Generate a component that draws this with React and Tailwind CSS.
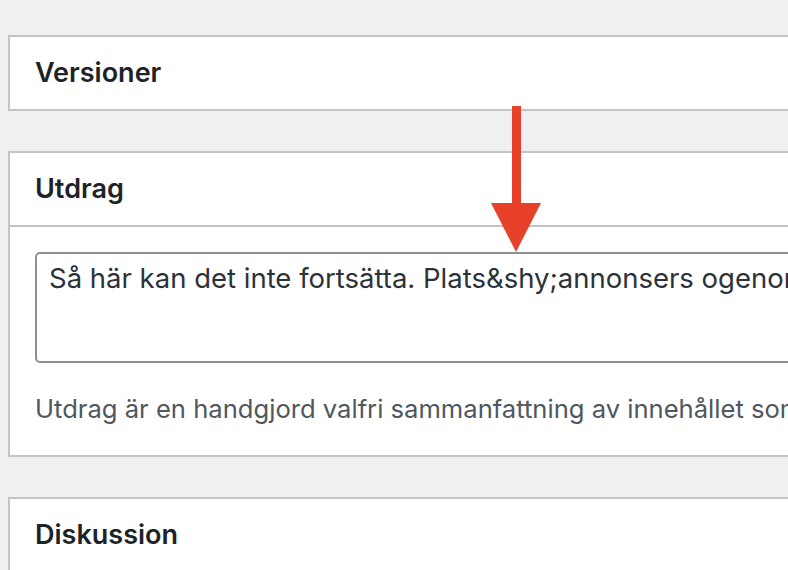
import React from "react";

const font = { fontFamily: "Inter, 'Liberation Sans', sans-serif" };

function Postbox({ title, children }) {
  return (
    <section className="w-[830px] bg-white border-2 border-[#c3c4c7]">
      <h2 className="h-[72px] flex items-center px-[25px] text-[27px] font-semibold text-[#1d2327]">
        {title}
      </h2>
      {children}
    </section>
  );
}

function Arrow() {
  return (
    <svg
      className="absolute left-[491px] top-[106px]"
      width="50"
      height="147"
      viewBox="0 0 50 147"
    >
      <rect x="21" y="0" width="9" height="100" fill="#e8412a" />
      <polygon points="0,97 50,97 25,146" fill="#e8412a" />
    </svg>
  );
}

export default function App() {
  return (
    <div
      className="relative w-[788px] h-[570px] overflow-hidden bg-[#f0f0f1] pl-[8px] pt-[35px]"
      style={font}
    >
      <div className="flex flex-col gap-[40px]">
        <Postbox title="Versioner" />

        <Postbox title="Utdrag">
          <div className="border-t-2 border-[#c3c4c7] px-[25px] pt-[25px] pb-[28px]">
            <div className="h-[111px] rounded-[5px] border-2 border-[#8c8f94] px-[12px] pt-[4px] text-[27.5px] leading-[40px] text-[#2c3338] whitespace-nowrap overflow-hidden">
              Så här kan det inte fortsätta. Plats&amp;shy;annonsers ogenomtänkta
            </div>
            <p className="mt-[28px] text-[25.6px] leading-[36px] text-[#50575e] whitespace-nowrap">
              Utdrag är en handgjord valfri sammanfattning av innehållet som kan användas i ditt tema.
            </p>
          </div>
        </Postbox>

        <Postbox title="Diskussion">
          <div className="h-[40px] border-t-2 border-[#c3c4c7]" />
        </Postbox>
      </div>
      <Arrow />
    </div>
  );
}
